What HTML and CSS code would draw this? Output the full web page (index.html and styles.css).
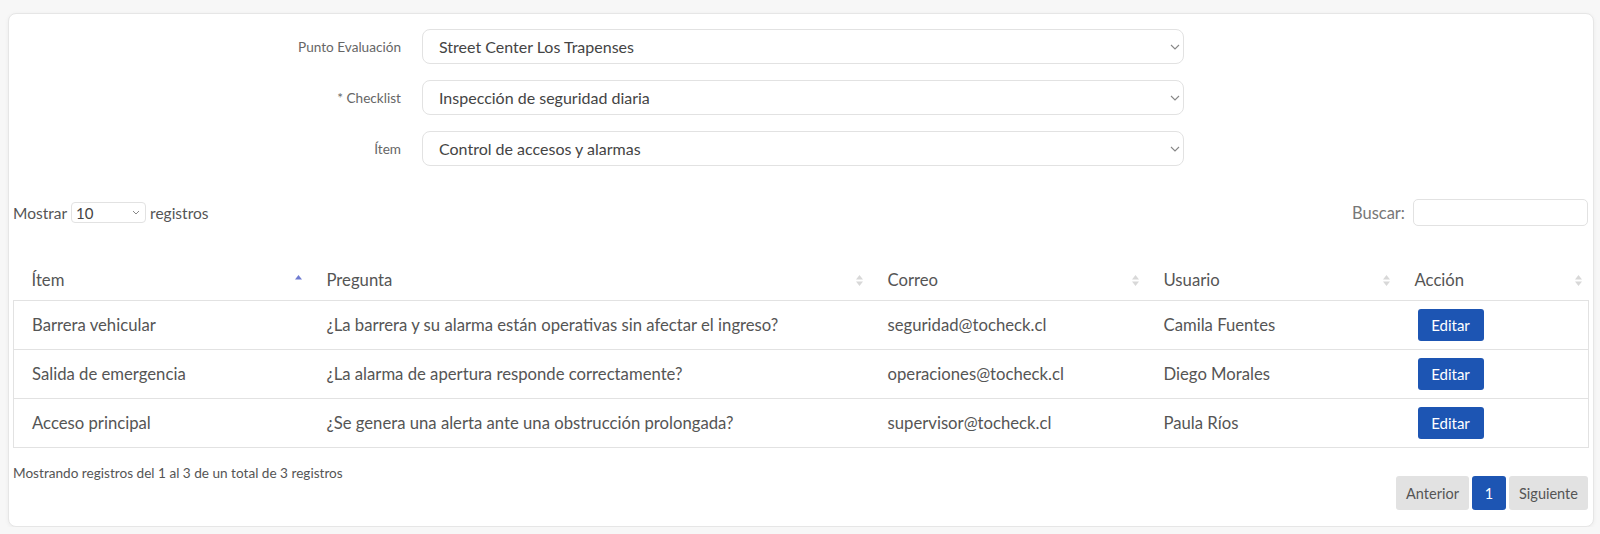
FILE: index.html
```html
<!DOCTYPE html>
<html lang="es">
<head>
<meta charset="utf-8">
<title>Checklist</title>
<link rel="stylesheet" href="styles.css">
</head>
<body>
<div class="card">
  <form class="filters">
    <label class="flabel" for="punto">Punto Evaluación</label>
    <select id="punto" class="fselect"><option>Street Center Los Trapenses</option></select>
    <label class="flabel" for="check">* Checklist</label>
    <select id="check" class="fselect"><option>Inspección de seguridad diaria</option></select>
    <label class="flabel" for="item">Ítem</label>
    <select id="item" class="fselect"><option>Control de accesos y alarmas</option></select>
  </form>

  <div class="controls">
    <div class="length">Mostrar <select class="lselect"><option>10</option></select> registros</div>
    <div class="search">Buscar: <input class="sinput" type="text"></div>
  </div>

  <table class="grid">
    <colgroup>
      <col class="c1"><col class="c2"><col class="c3"><col class="c4"><col class="c5">
    </colgroup>
    <thead>
      <tr>
        <th><div class="th-in"><span>Ítem</span><svg class="sort" viewBox="0 0 7 13"><path d="M0 5.5 L3.5 1 L7 5.5 Z" fill="#6f7bd1"/></svg></div></th>
        <th><div class="th-in"><span>Pregunta</span><svg class="sort" viewBox="0 0 7 13"><path d="M0 5.5 L3.5 1 L7 5.5 Z M0 7.5 L3.5 12 L7 7.5 Z" fill="#d8d8d8"/></svg></div></th>
        <th><div class="th-in"><span>Correo</span><svg class="sort" viewBox="0 0 7 13"><path d="M0 5.5 L3.5 1 L7 5.5 Z M0 7.5 L3.5 12 L7 7.5 Z" fill="#d8d8d8"/></svg></div></th>
        <th><div class="th-in"><span>Usuario</span><svg class="sort" viewBox="0 0 7 13"><path d="M0 5.5 L3.5 1 L7 5.5 Z M0 7.5 L3.5 12 L7 7.5 Z" fill="#d8d8d8"/></svg></div></th>
        <th><div class="th-in"><span>Acción</span><svg class="sort" viewBox="0 0 7 13"><path d="M0 5.5 L3.5 1 L7 5.5 Z M0 7.5 L3.5 12 L7 7.5 Z" fill="#d8d8d8"/></svg></div></th>
      </tr>
    </thead>
    <tbody>
      <tr>
        <td>Barrera vehicular</td>
        <td>¿La barrera y su alarma están operativas sin afectar el ingreso?</td>
        <td>seguridad@tocheck.cl</td>
        <td>Camila Fuentes</td>
        <td><button class="btn" type="button">Editar</button></td>
      </tr>
      <tr>
        <td>Salida de emergencia</td>
        <td>¿La alarma de apertura responde correctamente?</td>
        <td>operaciones@tocheck.cl</td>
        <td>Diego Morales</td>
        <td><button class="btn" type="button">Editar</button></td>
      </tr>
      <tr>
        <td>Acceso principal</td>
        <td>¿Se genera una alerta ante una obstrucción prolongada?</td>
        <td>supervisor@tocheck.cl</td>
        <td>Paula Ríos</td>
        <td><button class="btn" type="button">Editar</button></td>
      </tr>
    </tbody>
  </table>

  <div class="info">Mostrando registros del 1 al 3 de un total de 3 registros</div>
  <div class="pager">
    <button class="pbtn" type="button">Anterior</button>
    <button class="pbtn active" type="button">1</button>
    <button class="pbtn" type="button">Siguiente</button>
  </div>
</div>
</body>
</html>
```

FILE: styles.css
```css
* { box-sizing: border-box; }

html, body {
  margin: 0;
  padding: 0;
  background: #f7f7f7;
  font-family: Lato, "Open Sans", "Liberation Sans", sans-serif;
  color: #555;
}

body {
  padding: 13px 6px 0 8px;
}

.card {
  width: 1586px;
  height: 514px;
  background: #fff;
  border: 1px solid #e6e6e6;
  border-radius: 8px;
  box-shadow: 0 1px 4px rgba(0, 0, 0, 0.05);
  padding: 15px 5px 0 4px;
}

.filters {
  display: grid;
  grid-template-columns: 388px 762px;
  column-gap: 21px;
  row-gap: 16px;
  align-items: center;
  margin: 0;
}

.flabel {
  text-align: right;
  font-size: 13.6px;
  color: #666;
}

.fselect {
  appearance: none;
  -webkit-appearance: none;
  height: 35px;
  width: 762px;
  border: 1px solid #e2e2e2;
  border-radius: 8px;
  background: #fff url("data:image/svg+xml;utf8,<svg xmlns='http://www.w3.org/2000/svg' width='10' height='6' viewBox='0 0 10 6'><path d='M1 1 L5 5 L9 1' fill='none' stroke='%23888' stroke-width='1.1'/></svg>") no-repeat right 3px center;
  padding: 0 20px 0 16px;
  font-family: Lato, "Open Sans", sans-serif;
  font-size: 16px;
  color: #444;
}

.controls {
  display: flex;
  justify-content: space-between;
  align-items: center;
  margin-top: 33px;
  height: 27px;
}

.length {
  display: flex;
  align-items: center;
  gap: 4px;
  font-size: 15.5px;
  color: #555;
}

.lselect {
  appearance: none;
  -webkit-appearance: none;
  width: 75px;
  height: 21px;
  border: 1px solid #e2e2e2;
  border-radius: 4px;
  background: #fff url("data:image/svg+xml;utf8,<svg xmlns='http://www.w3.org/2000/svg' width='8' height='5' viewBox='0 0 8 5'><path d='M1 1 L4 4 L7 1' fill='none' stroke='%23888' stroke-width='1'/></svg>") no-repeat right 5px center;
  padding: 0 14px 0 4px;
  font-family: Lato, "Open Sans", sans-serif;
  font-size: 15px;
  color: #444;
}

.search {
  display: flex;
  align-items: center;
  gap: 8px;
  font-size: 16.5px;
  color: #777;
}

.sinput {
  width: 175px;
  height: 27px;
  border: 1px solid #e2e2e2;
  border-radius: 5px;
  background: #fff;
}

.grid {
  width: 1575px;
  border-collapse: collapse;
  table-layout: fixed;
  margin-top: 34px;
  font-size: 16.7px;
  color: #555;
}

.c1 { width: 295px; }
.c2 { width: 561px; }
.c3 { width: 276px; }
.c4 { width: 251px; }
.c5 { width: 192px; }

.grid th {
  font-weight: normal;
  text-align: left;
  padding: 10px 7px 10px 18px;
  border-bottom: 1px solid #e2e2e2;
  height: 39px;
}

.th-in {
  display: flex;
  justify-content: space-between;
  align-items: center;
}

.sort {
  width: 7px;
  height: 13px;
}

.grid td {
  padding: 0 18px;
  height: 49px;
  border-bottom: 1px solid #e2e2e2;
  white-space: nowrap;
}

.grid td:first-child { border-left: 1px solid #e2e2e2; }
.grid td:last-child { border-right: 1px solid #e2e2e2; padding-left: 21px; }

.btn {
  width: 66px;
  height: 32px;
  border: none;
  border-radius: 3px;
  background: #1d55b3;
  color: #fff;
  font-family: Lato, "Open Sans", sans-serif;
  font-size: 15px;
}

.info {
  margin-top: 17px;
  font-size: 13.6px;
  color: #555;
}

.pager {
  display: flex;
  justify-content: flex-end;
  gap: 3px;
  margin-top: -5px;
}

.pbtn {
  height: 34px;
  border: none;
  border-radius: 3px;
  background: #e2e2e2;
  color: #555;
  font-family: Lato, "Open Sans", sans-serif;
  font-size: 14.5px;
  padding: 0 8px;
}

.pbtn:first-child { width: 73px; }
.pbtn:last-child { width: 79px; }

.pbtn.active {
  width: 34px;
  background: #1d55b3;
  color: #fff;
}
```
